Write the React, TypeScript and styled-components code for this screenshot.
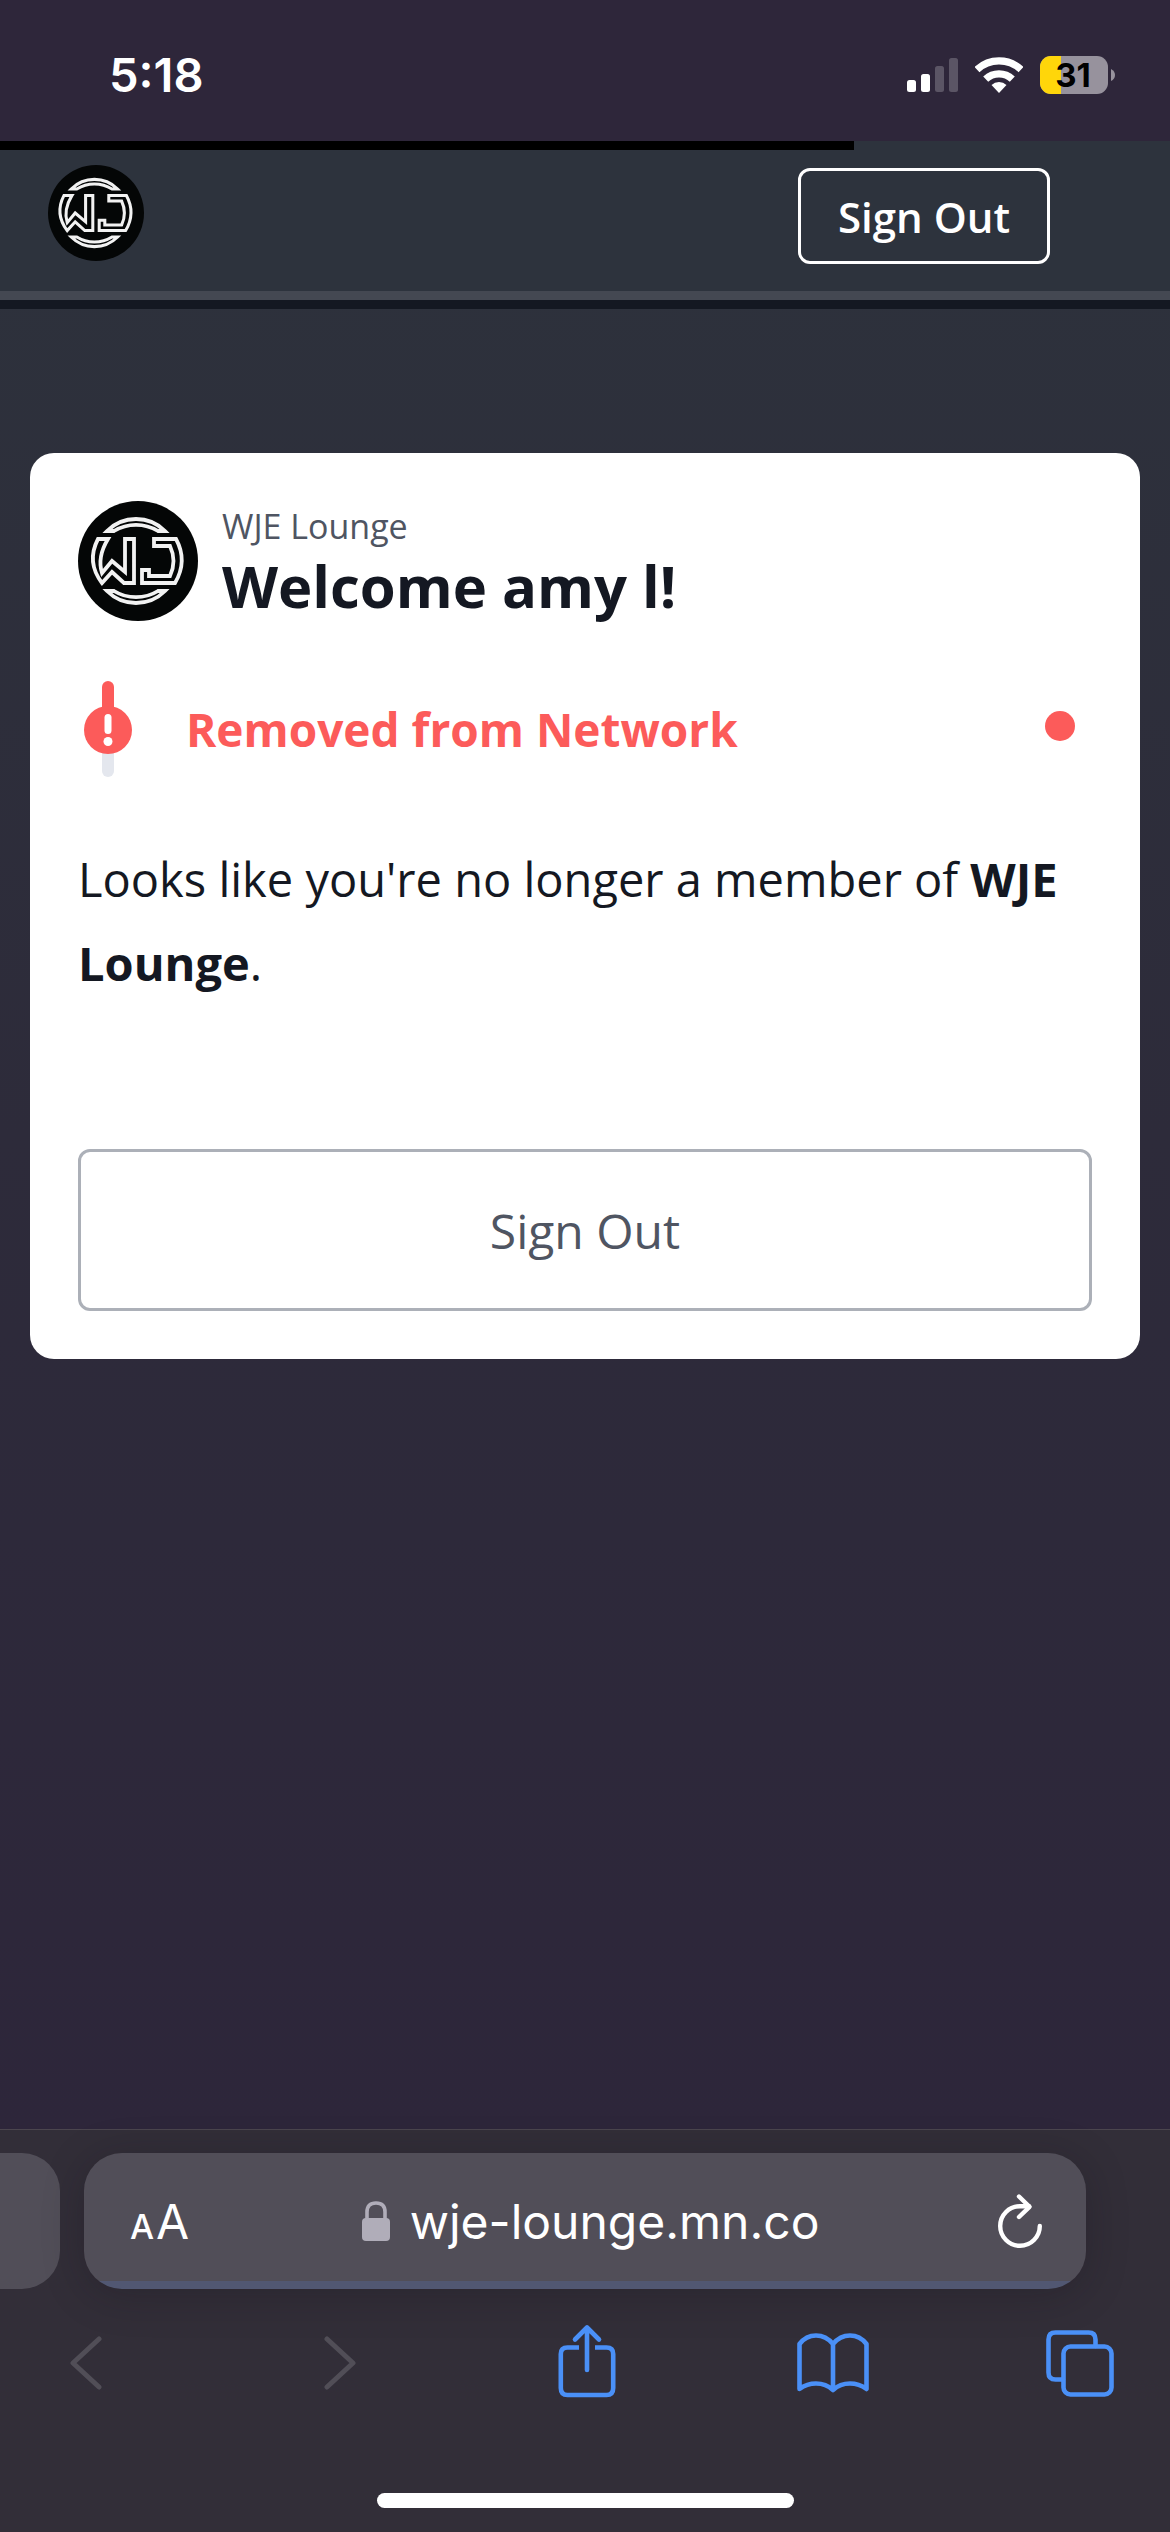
import React from "react";
import styled, { createGlobalStyle } from "styled-components";

const brandFont = `"Open Sans", "Noto Sans", sans-serif`;
const systemFont = `Inter, Roboto, sans-serif`;

const GlobalStyle = createGlobalStyle`
  * { box-sizing: border-box; }
  body { margin: 0; background: #2e263a; font-family: ${brandFont}; }
  button { margin: 0; padding: 0; background: none; border: 0; font: inherit; color: inherit; cursor: pointer; }
  h1, h2, p { margin: 0; }
  svg { display: block; }
`;

const Screen = styled.div`
  min-height: 100vh;
  display: flex;
  flex-direction: column;
`;

const StatusBar = styled.header`
  display: flex;
  justify-content: space-between;
  align-items: center;
  height: 141px;
  padding: 8px 54px 0 109px;
  background: #2e263a;
  color: #fff;
  font-family: ${systemFont};
`;

const Clock = styled.time`
  font-size: 47px;
  font-weight: 600;
  line-height: 56px;
`;

const StatusIcons = styled.div`
  display: flex;
  align-items: center;
  gap: 17px;
`;

const Page = styled.div`
  flex: 1;
  display: flex;
  flex-direction: column;
  background: linear-gradient(#2d323c, #2d2b3a 50%, #2d263a);
`;

const LoadBar = styled.div`
  height: 9px;
  background: #2d333d;
`;

const LoadFill = styled.div`
  width: 73%;
  height: 100%;
  background: #000;
`;

const Nav = styled.nav`
  display: flex;
  justify-content: space-between;
  align-items: flex-start;
  padding: 15px 120px 27px 48px;
  background: #2d333d;
  border-bottom: 9px solid #444852;
`;

const NavShade = styled.div`
  height: 9px;
  background: #141822;
`;

const NavButton = styled.button`
  height: 96px;
  margin-top: 3px;
  padding: 0 37px;
  border: 3px solid #fff;
  border-radius: 12px;
  color: #fff;
  font-size: 42px;
  font-weight: 600;
`;

const Main = styled.main`
  flex: 1;
  padding: 144px 30px 48px;
`;

const Card = styled.section`
  padding: 48px;
  border-radius: 24px;
  background: #fff;
  color: #141822;
`;

const CardHeader = styled.header`
  display: flex;
  gap: 24px;
`;

const NetworkName = styled.p`
  padding-top: 4px;
  color: #4f5562;
  font-size: 34px;
  line-height: 42px;
`;

const Title = styled.h1`
  font-size: 58px;
  font-weight: 700;
  line-height: 78px;
`;

const Alert = styled.div`
  display: flex;
  align-items: center;
  margin-top: 56px;
  padding: 0 17px 0 6px;
  color: #fc5b5a;
`;

const AlertTitle = styled.h2`
  flex: 1;
  padding-left: 54px;
  font-size: 46px;
  font-weight: 700;
  line-height: 66px;
`;

const AlertDot = styled.span`
  width: 30px;
  height: 30px;
  margin-bottom: 6px;
  border-radius: 50%;
  background: currentColor;
`;

const Message = styled.p`
  margin-top: 60px;
  font-size: 47px;
  line-height: 84px;
`;

const CardButton = styled.button`
  width: 100%;
  height: 162px;
  margin-top: 144px;
  border: 3px solid #acb0b8;
  border-radius: 12px;
  color: #4f5562;
  font-size: 48px;
`;

const BrowserBar = styled.footer`
  border-top: 1px solid #4b464e;
  background: #322e38;
  color: #fff;
  font-family: ${systemFont};
`;

const AddressRow = styled.div`
  display: flex;
  gap: 24px;
  padding: 23px 84px 0 0;
`;

const NextTab = styled.div`
  width: 60px;
  height: 136px;
  border-radius: 0 38px 38px 0;
  background: #514e58;
`;

const AddressBar = styled.div`
  flex: 1;
  display: flex;
  justify-content: space-between;
  align-items: center;
  height: 136px;
  padding: 0 44px 0 46px;
  border-radius: 38px;
  background: linear-gradient(#514e58 128px, #515772 128px);
  box-shadow: 0 6px 40px rgba(20, 16, 24, 0.25);
`;

const TextSize = styled.button`
  display: flex;
  align-items: baseline;
  gap: 2px;
  font-size: 48px;
`;

const SmallLetter = styled.span`
  font-size: 34px;
  font-weight: 500;
`;

const Address = styled.div`
  display: flex;
  align-items: center;
  gap: 20px;
  font-size: 48px;
`;

const ReloadButton = styled.button`
  display: flex;
  justify-content: flex-end;
  width: 50px;
`;

const Toolbar = styled.div`
  display: flex;
  justify-content: space-between;
  padding: 29px 54px 0 50px;
`;

const HistoryButtons = styled.div`
  display: flex;
  gap: 182px;
`;

const ToolButton = styled.button<{ $muted?: boolean }>`
  display: grid;
  place-items: center;
  width: 72px;
  height: 90px;
  color: ${(p) => (p.$muted ? "#514e57" : "#4a90f7")};
`;

const HomeIndicator = styled.div`
  width: 417px;
  height: 15px;
  margin: 85px auto 24px;
  border-radius: 8px;
  background: #fff;
`;

function Logo({ size }: { size: number }) {
  return (
    <svg width={size} height={size} viewBox="0 0 120 120" role="img" aria-label="WJE Lounge logo">
      <circle cx="60" cy="60" r="60" fill="#040606" />
      <g fill="none" stroke="#f2f2f2" strokeWidth="3.8">
        <path d="M29 30 A41 41 0 0 1 87 30 L80 30 A42 42 0 0 0 36 30 Z" />
        <path d="M29 90 A41 41 0 0 0 87 90 L80 90 A42 42 0 0 1 36 90 Z" />
        <path d="M20 38 H30 Q19 56 24 72 L34 60 L47 71 V38 H56 V82 H46 L34 71 L24 82 Q8 61 20 38 Z" />
        <path d="M76 38 H98 Q110 60 97 82 H64 V69 H71 V75 H92 Q99 60 92 45 H76 Z" />
      </g>
    </svg>
  );
}

function SignalIcon() {
  return (
    <svg width="51" height="36" viewBox="0 0 51 36" fill="#fff" aria-hidden="true">
      <rect x="0" y="23" width="9" height="12" rx="2.5" />
      <rect x="14" y="17" width="9" height="18" rx="2.5" />
      <rect x="28" y="9" width="9" height="26" rx="2.5" opacity=".22" />
      <rect x="42" y="1" width="9" height="34" rx="2.5" opacity=".22" />
    </svg>
  );
}

function WifiIcon() {
  return (
    <svg width="48" height="36" viewBox="0 0 48 36" fill="none" stroke="#fff" strokeWidth="7.2" aria-hidden="true">
      <path d="M2 12.600 A32.200 32.200 0 0 1 46 12.600" />
      <path d="M10.700 22.200 A19.200 19.200 0 0 1 37.300 22.200" />
      <path d="M24 36 L16.500 28 A11 11 0 0 1 31.500 28 Z" fill="#fff" stroke="none" />
    </svg>
  );
}

function BatteryIcon() {
  return (
    <svg width="76" height="38" viewBox="0 0 76 38" role="img" aria-label="Battery 31%">
      <clipPath id="battery">
        <rect width="68" height="38" rx="11" />
      </clipPath>
      <g clipPath="url(#battery)">
        <rect width="68" height="38" fill="#97929d" />
        <rect width="21" height="38" fill="#ffd60a" />
      </g>
      <path d="M71 13 Q75 15 75 19 Q75 23 71 25 Z" fill="#97929d" />
      <text x="33" y="31" textAnchor="middle" fontFamily={systemFont} fontSize="33" fontWeight="700" fill="#000">
        31
      </text>
    </svg>
  );
}

function AlertIcon() {
  return (
    <svg width="48" height="96" viewBox="0 0 48 96" aria-hidden="true">
      <rect x="18" y="60" width="12" height="36" rx="6" fill="#e4e7ee" />
      <rect x="18" y="0" width="12" height="40" rx="6" fill="#fc5b5a" />
      <circle cx="24" cy="49" r="24" fill="#fc5b5a" />
      <rect x="20.500" y="33" width="7" height="20" rx="3.500" fill="#fff" />
      <circle cx="24" cy="60.500" r="4.500" fill="#fff" />
    </svg>
  );
}

function LockIcon() {
  return (
    <svg width="28" height="40" viewBox="0 0 28 40" aria-hidden="true">
      <rect x="0" y="17" width="28" height="23" rx="4" fill="#b0adb9" />
      <path d="M5 18 V11 Q5 2 14 2 Q23 2 23 11 V18" fill="none" stroke="#b0adb9" strokeWidth="3.6" />
    </svg>
  );
}

const line = { fill: "none", stroke: "currentColor", strokeLinecap: "round", strokeLinejoin: "round" } as const;

function ReloadIcon() {
  return (
    <svg width="44" height="54" viewBox="0 0 44 54" strokeWidth="4.400" {...line} aria-hidden="true">
      <path d="M41.800 32 A19.800 19.800 0 1 1 22 12.200 H31" />
      <path d="M21 2.500 L31.500 12.800 L21 23" />
    </svg>
  );
}

export default function App() {
  return (
    <Screen>
      <GlobalStyle />
      <StatusBar>
        <Clock>5:18</Clock>
        <StatusIcons>
          <SignalIcon />
          <WifiIcon />
          <BatteryIcon />
        </StatusIcons>
      </StatusBar>
      <Page>
        <LoadBar>
          <LoadFill />
        </LoadBar>
        <Nav>
          <Logo size={96} />
          <NavButton type="button">Sign Out</NavButton>
        </Nav>
        <NavShade />
        <Main>
          <Card>
            <CardHeader>
              <Logo size={120} />
              <div>
                <NetworkName>WJE Lounge</NetworkName>
                <Title>Welcome amy l!</Title>
              </div>
            </CardHeader>
            <Alert>
              <AlertIcon />
              <AlertTitle>Removed from Network</AlertTitle>
              <AlertDot />
            </Alert>
            <Message>
              Looks like you're no longer a member of <b>WJE Lounge</b>.
            </Message>
            <CardButton type="button">Sign Out</CardButton>
          </Card>
        </Main>
      </Page>
      <BrowserBar>
        <AddressRow>
          <NextTab />
          <AddressBar>
            <TextSize type="button" aria-label="Text size">
              <SmallLetter>A</SmallLetter>
              <span>A</span>
            </TextSize>
            <Address>
              <LockIcon />
              <span>wje-lounge.mn.co</span>
            </Address>
            <ReloadButton type="button" aria-label="Reload">
              <ReloadIcon />
            </ReloadButton>
          </AddressBar>
        </AddressRow>
        <Toolbar>
          <HistoryButtons>
            <ToolButton type="button" $muted aria-label="Back">
              <svg width="32" height="54" viewBox="0 0 32 54" strokeWidth="5" {...line}>
                <path d="M29 3 L3 27 L29 51" />
              </svg>
            </ToolButton>
            <ToolButton type="button" $muted aria-label="Forward">
              <svg width="32" height="54" viewBox="0 0 32 54" strokeWidth="5" {...line}>
                <path d="M3 3 L29 27 L3 51" />
              </svg>
            </ToolButton>
          </HistoryButtons>
          <ToolButton type="button" aria-label="Share">
            <svg width="58" height="78" viewBox="0 0 58 78" strokeWidth="4.600" {...line}>
              <path
                strokeLinecap="butt"
                d="M21 23.500 H9.500 Q2.800 23.500 2.800 30 V64 Q2.800 71 9.500 71 H48.500 Q55.200 71 55.200 64 V30 Q55.200 23.500 48.500 23.500 H37"
              />
              <path d="M29 46 V3.500 M17 15.500 L29 3.500 L41 15.500" />
            </svg>
          </ToolButton>
          <ToolButton type="button" aria-label="Bookmarks">
            <svg width="72" height="60" viewBox="0 0 72 60" strokeWidth="4.600" {...line}>
              <path d="M36 11 Q29 2.500 19 2.500 Q9 2.500 2.500 11 V56 Q10 50.500 19 50.500 Q29 50.500 36 57 Q43 50.500 53 50.500 Q62 50.500 69.500 56 V11 Q63 2.500 53 2.500 Q43 2.500 36 11 V57" />
            </svg>
          </ToolButton>
          <ToolButton type="button" aria-label="Tabs">
            <svg width="68" height="67" viewBox="0 0 68 67" strokeWidth="4.600" {...line}>
              <rect x="17.500" y="16.500" width="48" height="48" rx="7" />
              <path d="M49.500 16 V9.500 Q49.500 2.500 42.500 2.500 H9.500 Q2.500 2.500 2.500 9.500 V42.500 Q2.500 49.500 9.500 49.500 H17" />
            </svg>
          </ToolButton>
        </Toolbar>
        <HomeIndicator />
      </BrowserBar>
    </Screen>
  );
}
